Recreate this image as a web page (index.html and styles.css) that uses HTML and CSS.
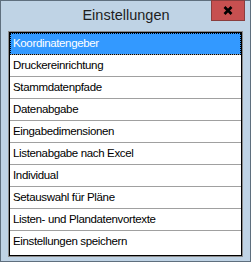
FILE: index.html
```html
<!DOCTYPE html>
<html><head>
<meta charset="utf-8">
<link rel="stylesheet" href="styles.css">
</head>
<body>
	<div id="window">
		<div id="titlebar">
			<span></span>
			<span id="title">Einstellungen</span>
			<button id="close" type="button">
				<svg width="10" height="9" viewBox="0 0 10 9"><path d="M1.5 1 L8.5 8 M8.5 1 L1.5 8" stroke="#000" stroke-width="2.6"/></svg>
			</button>
		</div>

		<!-- list of settings pages -->
		<div id="list">
			<div class="item selected">Koordinatengeber</div>
			<div class="item">Druckereinrichtung</div>
			<div class="item">Stammdatenpfade</div>
			<div class="item">Datenabgabe</div>
			<div class="item">Eingabedimensionen</div>
			<div class="item">Listenabgabe nach Excel</div>
			<div class="item">Individual</div>
			<div class="item">Setauswahl für Pläne</div>
			<div class="item">Listen- und Plandatenvortexte</div>
			<div class="item last">Einstellungen speichern</div>
		</div>
	</div>
</body></html>
```

FILE: styles.css
```css
 body{
	margin: 0;
	font-family: "Liberation Sans", Arial, sans-serif;
 }

 #window{
	width: 251px;
	height: 262px;
	box-sizing: border-box;
	border: 1px solid #5f6f7e;
	background: #bfd3e5;
 }

 #titlebar{
	display: grid;
	grid-template-columns: 1fr auto 1fr;
	align-items: start;
	height: 30px;
 }

 #title{
	font-size: 14.5px;
	color: #1e1e1e;
	padding-top: 6px;
	padding-left: 1px;
 }

 #close{
	justify-self: end;
	margin: -1px 5px 0 0;
	width: 34px;
	height: 21px;
	padding: 0;
	border: 1px solid #8a3e3e;
	background: #c75050;
	display: flex;
	align-items: center;
	justify-content: center;
 }

 #list{
	margin-left: 7px;
	width: 235px;
	height: 226px;
	box-sizing: border-box;
	border: 1px solid #8c8c8c;
	background: #fff;
	box-shadow: inset 0 0 0 1px #000;
	padding: 1px;
	font-size: 11.5px;
	letter-spacing: -0.35px;
 }

 .item{
	height: 21px;
	line-height: 21px;
	padding-left: 3px;
	border-bottom: 1px solid #a0a0a0;
	color: #000;
 }

 .item.last{
	border-bottom: none;
 }

 .item.selected{
	background: #3399ff;
	color: #fff;
	outline: 1px dotted #000;
	outline-offset: -1px;
 }
```
